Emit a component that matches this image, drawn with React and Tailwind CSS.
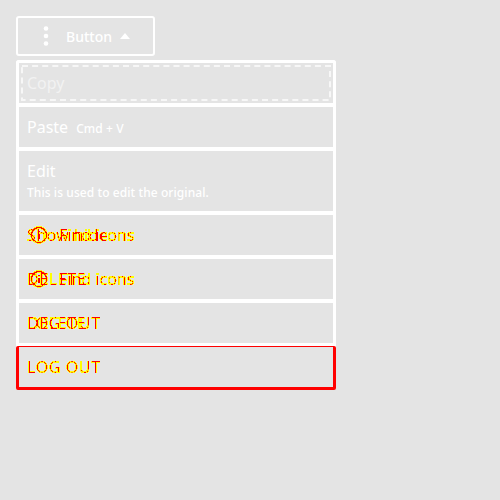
const texts = 'absolute left-0 top-0 whitespace-pre';

function Info({ className = '' }) {
  return (
    <svg className={className} width="18" height="18" viewBox="0 0 18 18" fill="none" stroke="#000" strokeWidth="1.8">
      <circle cx="9" cy="9" r="7.5" />
      <path d="M9 8v5M9 5v1.7" strokeWidth="2" />
    </svg>
  );
}

function Row({ children, className = 'h-11 border-b-4' }) {
  return <li className={`border-white px-2 pt-2 text-[16px] leading-6 ${className}`}>{children}</li>;
}

function Diff({ children }) {
  return <div className="relative h-6 [filter:url(#diff)]">{children}</div>;
}

export default function App() {
  return (
    <main className="h-[500px] w-[500px] overflow-hidden bg-[#e4e4e4] p-4 font-['Noto_Sans',sans-serif] text-white">
      <svg width="0" height="0" className="absolute">
        <filter id="diff" colorInterpolationFilters="sRGB" x="-5%" y="-5%" width="110%" height="110%">
          <feColorMatrix in="SourceAlpha" type="matrix" values="0 0 0 0 1  0 0 0 -20 19  0 0 0 0 0  0 0 0 30 -1" />
        </filter>
      </svg>
      <button className="flex h-10 w-[139px] items-center rounded-[3px] border-2 border-white text-[14px] font-medium">
        <svg className="ml-[22px]" width="12" height="24" fill="white">
          <circle cx="6" cy="4.5" r="2.3" /><circle cx="6" cy="12" r="2.3" /><circle cx="6" cy="19.5" r="2.3" />
        </svg>
        <span className="ml-[14px] w-[47px] whitespace-nowrap text-left">Button</span>
        <svg className="ml-[7px]" width="10" height="6" fill="white"><path d="M0 6 5 0 10 6z" /></svg>
      </button>
      <ul className="mt-1 w-80 rounded-t-[3px] border-x-[3px] border-t-[3px] border-white">
        <li className="h-11 border-b-4 border-white">
          <div className="relative flex h-full items-center px-2 text-[16px] text-[#f2f2f2]">
            <svg className="absolute left-0 top-0" width="314" height="40" fill="none">
              <rect x="3" y="3" width="308" height="34" stroke="#f7f7f7" strokeWidth="2" strokeDasharray="6 4.1" />
            </svg>
            <span>Copy</span>
          </div>
        </li>
        <Row><span>Paste</span><span className="ml-2 text-[12px] font-medium tracking-[0.08px]">Cmd + V</span></Row>
        <Row className="h-16 border-b-4">
          <div>Edit</div>
          <div className="text-[12px] font-medium leading-5 tracking-[0.08px]">This is used to edit the original.</div>
        </Row>
        <Row>
          <Diff>
            <span className={`${texts} tracking-[0.4px]`}>Show hide</span>
            <Info className="absolute left-[3px] top-[3px]" />
            <span className="absolute left-8 top-0 whitespace-pre">Find icons</span>
          </Diff>
        </Row>
        <Row>
          <Diff>
            <span className={`${texts} tracking-[0.6px]`}>DELETE</span>
            <Info className="absolute left-[3px] top-[3px]" />
            <span className="absolute left-8 top-0 whitespace-pre">Find icons</span>
          </Diff>
        </Row>
        <Row>
          <Diff>
            <span className={`${texts} tracking-[0.6px]`}>DELETE</span>
            <span className={`${texts} tracking-[0.6px]`}>LOG OUT</span>
          </Diff>
        </Row>
      </ul>
      <div className="-mt-px h-11 w-80 rounded-[2px] border-x-[3px] border-b-[3px] border-t border-[#f00] px-2 pt-2 text-[16px] leading-6">
        <Diff><span className={`${texts} tracking-[0.6px]`}>LOG OUT</span></Diff>
      </div>
    </main>
  );
}
